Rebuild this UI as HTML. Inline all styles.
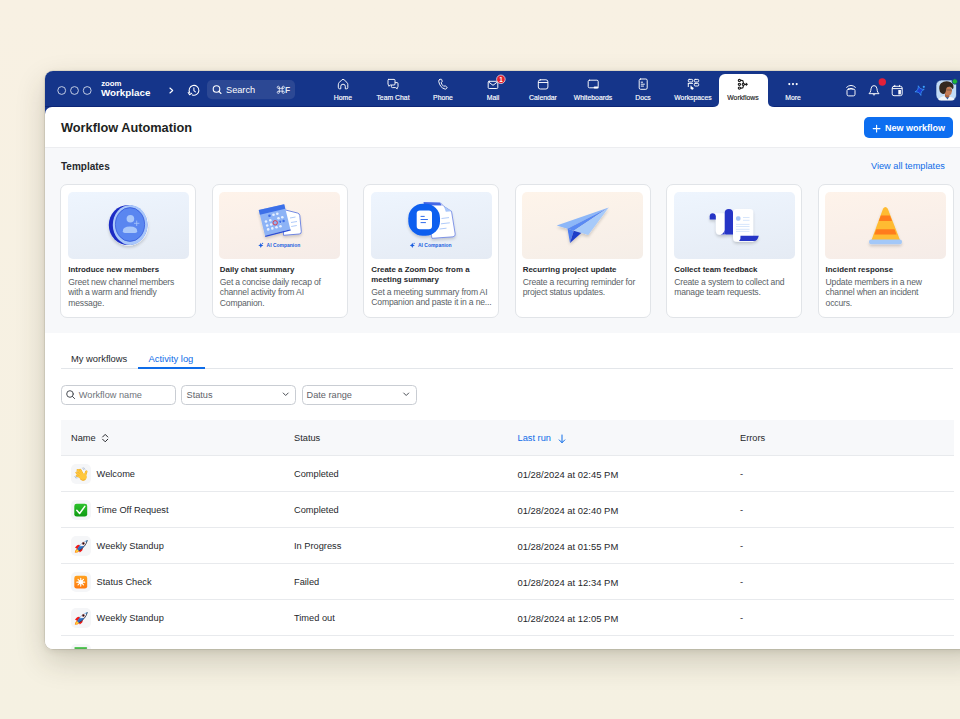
<!DOCTYPE html>
<html><head><meta charset="utf-8">
<style>
*{box-sizing:border-box;margin:0;padding:0}
html,body{width:960px;height:719px;overflow:hidden}
body{font-family:"Liberation Sans",sans-serif;background:linear-gradient(180deg,#F8F1E3 0%,#F5F1E2 100%);position:relative;color:#222}
.a{position:absolute;white-space:nowrap}
#win{position:absolute;left:45px;top:71px;width:940px;height:578px;border-radius:8px;background:#fff;overflow:hidden;box-shadow:0 0 0 0.5px rgba(60,55,40,0.18),0 12px 30px rgba(50,45,25,0.20),0 2px 6px rgba(50,45,25,0.10)}
#content{position:absolute;left:0;top:36px;width:100%;height:542px;background:#fff;border-radius:7px 0 0 0}
.nl{position:absolute;top:93.8px;width:60px;margin-left:-30px;text-align:center;color:#fff;font-size:6.85px;line-height:8px;white-space:nowrap;-webkit-text-stroke:0.15px #fff}
.card{position:absolute;top:183.6px;width:136px;height:134px;border:1px solid #E1E4E8;border-radius:7px;background:#fff}
.card .img{position:absolute;left:6.5px;top:7.4px;width:121px;height:67px;border-radius:5px;overflow:hidden}
.card .t{position:absolute;left:7px;top:80px;font-size:7.9px;font-weight:700;line-height:10.3px;color:#26282C;white-space:nowrap}
.card .d{position:absolute;left:7px;font-size:8.6px;letter-spacing:-0.18px;line-height:10.3px;color:#5A5F66;white-space:nowrap}
.th{position:absolute;top:433.4px;font-size:9.25px;line-height:11px;color:#26282C}
.td{position:absolute;font-size:9.25px;line-height:11px;color:#26282C;white-space:nowrap}
.rowline{position:absolute;left:60.5px;width:893px;height:1px;background:#E8EAED}
.ibox{position:absolute;left:71px;width:20px;height:20px;border-radius:5px;background:#F5F6F8}
</style></head><body>
<div id="win">
  <div style="position:absolute;left:0;top:0;width:100%;height:46px;background:#15358A"></div>
  <div style="position:absolute;left:0;top:35px;width:668px;height:1px;background:#0C2576"></div>
  <div style="position:absolute;left:729px;top:35px;width:300px;height:1px;background:#0C2576"></div>
  <div id="content"></div>
  <div style="position:absolute;left:674px;top:3px;width:49px;height:34px;background:#fff;border-radius:6px 6px 0 0"></div>
  <div style="position:absolute;left:668px;top:30px;width:6px;height:6px;background:#fff"></div>
  <div style="position:absolute;left:668px;top:29px;width:6px;height:7px;background:#15358A;border-radius:0 0 5px 0"></div>
  <div style="position:absolute;left:723px;top:30px;width:6px;height:6px;background:#fff"></div>
  <div style="position:absolute;left:723px;top:29px;width:6px;height:7px;background:#15358A;border-radius:0 0 0 5px"></div>
</div>
<!-- NAV -->
<svg class="a" style="left:0;top:0" width="960" height="719" viewBox="0 0 960 719">
  <g fill="none" stroke="#D4DBEC" stroke-width="0.9">
    <circle cx="61.7" cy="90.5" r="3.9"/>
    <circle cx="74.5" cy="90.5" r="3.9"/>
    <circle cx="87.2" cy="90.5" r="3.9"/>
  </g>
  <!-- chevron -->
  <path d="M169.9 88 L172.7 90.5 L169.9 93" fill="none" stroke="#fff" stroke-width="1.1" stroke-linecap="round" stroke-linejoin="round"/>
  <!-- history -->
  <g fill="none" stroke="#fff" stroke-width="1.05" stroke-linecap="round" stroke-linejoin="round">
    <path d="M189.76 92.75 A4.9 4.9 0 1 1 192.3 94.9"/>
    <path d="M188.2 92.5 L189.6 94.7 L191.7 93.3"/>
    <path d="M193.9 87.8 V90.6 L195.4 91.9"/>
  </g>
  <!-- search box -->
  <rect x="207" y="80" width="88" height="19.3" rx="5" fill="#2C4894"/>
  <g fill="none" stroke="#fff" stroke-width="1.1" stroke-linecap="round">
    <circle cx="216.5" cy="89" r="3.3"/>
    <path d="M218.9 91.4 L221 93.5"/>
  </g>
  <!-- nav icons -->
  <g fill="none" stroke="#fff" stroke-width="0.95" stroke-linecap="round" stroke-linejoin="round">
    <!-- home -->
    <path d="M338.3 84.5 Q338.3 83.3 339.3 82.4 L341.9 79.8 Q343 78.9 344.1 79.8 L346.9 82.4 Q347.8 83.3 347.8 84.5 V87.6 Q347.8 88.8 346.6 88.8 H345.3 V86.3 Q345.3 84.2 343 84.2 Q340.8 84.2 340.8 86.3 V88.8 H339.5 Q338.3 88.8 338.3 87.6 Z"/>
    <!-- team chat -->
    <path d="M388.6 79.4 H394 Q395 79.4 395 80.4 V84 Q395 85 394 85 H390.5 L388.8 86.2 V85 Q388 85 388 84 V80.4 Q388 79.4 388.6 79.4 Z"/>
    <path d="M395.5 82.6 H397 Q398 82.6 398 83.6 V86.6 Q398 87.6 397.2 87.6 V88.8 L395.5 87.6 H392.4 Q391.4 87.6 391.4 86.6 V85.6"/>
    <!-- phone -->
    <path d="M439.5 79.6 L440.9 79.2 Q441.5 79.1 441.7 79.6 L442.2 81.3 Q442.3 81.9 441.8 82.2 L441.1 82.6 Q441.8 84.9 443.9 86.5 L444.5 86 Q445 85.7 445.5 86 L446.8 87 Q447.3 87.4 447 87.9 L446.4 88.7 Q445.9 89.2 445.1 89.1 Q440 87.8 438.7 81.3 Q438.6 79.9 439.5 79.6 Z"/>
    <!-- mail -->
    <rect x="488.2" y="81.3" width="9.6" height="7.2" rx="1"/>
    <path d="M488.6 82 L493 85.3 L497.4 82"/>
    <!-- calendar -->
    <rect x="538.3" y="79.8" width="9.6" height="9.2" rx="2"/>
    <path d="M538.6 82.5 H547.6"/>
    <!-- whiteboards -->
    <rect x="588.2" y="80.2" width="10" height="7.6" rx="1.3"/>
    <!-- docs -->
    <rect x="639.2" y="79" width="8" height="10.3" rx="1.4"/>
    <path d="M641.2 82.2 H642.6 M641.2 84.2 H644.4 M641.2 86.1 H643.5"/>
    <!-- workspaces -->
    <rect x="688.3" y="79.4" width="4.4" height="2.6" rx="0.9"/>
    <rect x="694.3" y="79.4" width="4.4" height="2.6" rx="0.9"/>
    <rect x="694.3" y="83.4" width="4.4" height="2.6" rx="0.9"/>
    <path d="M688.3 83.4 H692.6 M688.3 83.4 V86.6"/>
  </g>
  <rect x="593.6" y="86.4" width="5" height="2.2" rx="1" fill="#fff"/>
  <path d="M690.6 85.6 Q691.4 85.3 691.6 86.3 L691.8 87 Q693.2 87 693.6 88 Q693.8 89.2 692.8 89.6 Q691.2 89.8 690.4 88.6 Z" fill="#fff"/>
  <!-- mail badge -->
  <circle cx="500.9" cy="79.3" r="4.3" fill="#E0202F" stroke="#E8EEFA" stroke-width="0.7"/>
  <text x="500.9" y="81.7" font-family="Liberation Sans" font-size="6.3" font-weight="700" fill="#fff" text-anchor="middle">1</text>

  <!-- workflows icon -->
  <g fill="none" stroke="#1A1A1A" stroke-width="1.15" stroke-linecap="round" stroke-linejoin="round">
    <circle cx="739.4" cy="80.4" r="1.1"/>
    <circle cx="739.4" cy="84.3" r="1.1"/>
    <circle cx="739.4" cy="88.1" r="1.1"/>
    <circle cx="743.3" cy="84.3" r="1.1"/>
    <path d="M740.6 80.4 H741.6 Q743.3 80.4 743.3 82.2 V83.1 M743.3 85.5 V86.4 Q743.3 88.1 741.6 88.1 H740.6 M744.5 84.3 H746.4"/>
  </g>
  <path d="M745.9 82.4 L748 84.3 L745.9 86.2 Z" fill="#1A1A1A"/>
  <!-- right icons -->
  <g fill="none" stroke="#fff" stroke-width="0.95" stroke-linecap="round" stroke-linejoin="round">
    <path d="M846.6 87.3 Q851 83.3 855.4 87.3"/>
    <path d="M848.7 89.2 Q851 87 853.3 89.2"/>
    <rect x="847" y="89" width="8" height="6.9" rx="1.6"/>
    <path d="M869.3 93.4 Q870.6 92.2 870.8 90.4 L871 88.8 Q871.3 85.6 874 85.6 Q876.7 85.6 877 88.8 L877.2 90.4 Q877.4 92.2 878.7 93.4 Z"/>
    <path d="M873 94.6 Q874 96 875 94.6"/>
    <rect x="892.2" y="86.3" width="10" height="9.4" rx="1.8"/>
    <path d="M892.5 88.6 H901.9 M894.8 85.3 V86.5 M899.6 85.3 V86.5"/>
  </g>
  <rect x="898.3" y="90" width="2.6" height="4.4" fill="#fff"/>
  <circle cx="882.3" cy="82" r="3.7" fill="#E2203A"/>
  <!-- AI sparkle -->
  <defs><linearGradient id="spk" x1="0" y1="0" x2="1" y2="1"><stop offset="0" stop-color="#37A2FF"/><stop offset="1" stop-color="#1545D8"/></linearGradient></defs>
  <path d="M919.6 85.6 Q920.3 89.9 924.4 90.6 Q920.3 91.3 919.6 95.6 Q918.9 91.3 914.8 90.6 Q918.9 89.9 919.6 85.6 Z" fill="#1B3CCF" stroke="#3C9BFF" stroke-width="0.7" transform="rotate(-15 919.6 90.6)"/>
  <circle cx="923.8" cy="86.8" r="1.1" fill="#3DA5FF"/>
  <!-- avatar -->
  <defs><clipPath id="avc"><rect x="936" y="80" width="20.5" height="20.5" rx="5.5"/></clipPath></defs>
  <rect x="936" y="80" width="20.5" height="20.5" rx="5.5" fill="#C2DBF6" stroke="#0F2C7A" stroke-width="0.6"/>
  <g clip-path="url(#avc)">
    <path d="M937.5 101 Q938.5 97.5 942.5 96.5 L946 95.8 Q951 96.5 953.5 98 Q955 99.5 955 101 Z" fill="#F4F6F9"/>
    <path d="M945.2 96.8 L947.6 99.5 L949.2 96.6 Z" fill="#2E5DA8"/>
    <path d="M944.8 92.5 Q945.4 95 944.8 96.6 Q947.5 98.6 949.6 96.5 L949 94 Z" fill="#A8623F"/>
    <path d="M944 88.5 Q945.5 85.6 949.2 86.2 Q951.8 87 952 90.2 Q952.2 91.5 951.6 92.3 Q951.8 93.4 950.8 94.4 Q949 96 946.8 95.4 Q944.6 94.2 944 91.5 Z" fill="#C47C57"/>
    <path d="M946.5 90 H951.8" stroke="#3A3A3A" stroke-width="0.5"/>
    <path d="M939.6 90.5 Q938.4 86 941 83.2 Q944 80.8 948.4 81.4 Q952.4 82.2 953.4 85.4 Q954 88 952.6 89.2 Q951.8 87.4 950 86.8 Q947.5 86.5 946.5 88 Q946 89.6 945.8 91.6 Q945.2 93.2 944.2 94 Q942.2 94.2 940.8 92.8 Q939.6 92 939.6 90.5 Z" fill="#34281F"/>
  </g>
  <circle cx="954.8" cy="81.5" r="2.7" fill="#1DB536" stroke="#15358A" stroke-width="0.8"/>

  <!-- more dots -->
  <g fill="#fff"><circle cx="789.3" cy="84.1" r="1.05"/><circle cx="793" cy="84.1" r="1.05"/><circle cx="796.7" cy="84.1" r="1.05"/></g>
</svg>
<div class="a" style="left:101.3px;top:80.4px;font-size:7.8px;font-weight:700;color:#fff;line-height:8px;letter-spacing:-0.1px">zoom</div>
<div class="a" style="left:101px;top:87px;font-size:9.8px;font-weight:700;color:#fff;line-height:11px">Workplace</div>
<div class="a" style="left:226px;top:85px;font-size:9.2px;color:#fff;line-height:10px">Search</div>
<svg class="a" style="left:276px;top:85px" width="10" height="10" viewBox="0 0 10 10"><g fill="none" stroke="#E6EAF4" stroke-width="0.8"><path d="M3.4 2.2 V7.2 M6.2 2.2 V7.2 M2.2 3.4 H7.4 M2.2 6.2 H7.4"/><circle cx="2.3" cy="2.3" r="1.1"/><circle cx="7.3" cy="2.3" r="1.1"/><circle cx="2.3" cy="7.3" r="1.1"/><circle cx="7.3" cy="7.3" r="1.1"/></g></svg>
<div class="a" style="left:285px;top:84.8px;font-size:8.3px;font-weight:700;color:#E6EAF4;line-height:10px">F</div>
<div class="nl" style="left:343px">Home</div>
<div class="nl" style="left:393px">Team Chat</div>
<div class="nl" style="left:443px">Phone</div>
<div class="nl" style="left:493px">Mail</div>
<div class="nl" style="left:543px">Calendar</div>
<div class="nl" style="left:593px">Whiteboards</div>
<div class="nl" style="left:643px">Docs</div>
<div class="nl" style="left:693px">Workspaces</div>
<div class="nl" style="left:743px;color:#222;-webkit-text-stroke:0.15px #222">Workflows</div>
<div class="nl" style="left:793px">More</div>



<!-- HEADER -->
<div class="a" style="left:45px;top:147px;width:915px;height:1px;background:#ECEDF0"></div>
<div class="a" style="left:45px;top:148px;width:915px;height:185px;background:#F7F8FA"></div>
<div class="a" style="left:61px;top:120px;font-size:12.75px;font-weight:700;line-height:15px;color:#1E1F22">Workflow Automation</div>
<div class="a" style="left:864px;top:117.3px;width:89px;height:20.5px;border-radius:5px;background:#0D6EF0"></div>
<svg class="a" style="left:872px;top:123.5px" width="9" height="9" viewBox="0 0 9 9"><path d="M4.6 1.2 V8 M1.2 4.6 H8" stroke="#fff" stroke-width="1.1" stroke-linecap="round"/></svg>
<div class="a" style="left:885px;top:123px;font-size:9px;font-weight:700;line-height:11px;color:#fff">New workflow</div>
<div class="a" style="left:61px;top:161px;font-size:10px;font-weight:700;line-height:12px;color:#26282C">Templates</div>
<div class="a" style="left:871px;top:161.4px;font-size:9.2px;line-height:11px;color:#0E6CE8">View all templates</div>

<!-- CARDS -->
<div class="card" style="left:60.3px"><div class="img" id="img1" style="background:linear-gradient(170deg,#EEF5FE,#E5EBF4)"></div>
  <div class="t">Introduce new members</div>
  <div class="d" style="top:92.6px">Greet new channel members<br>with a warm and friendly<br>message.</div></div>
<div class="card" style="left:211.8px"><div class="img" id="img2" style="background:linear-gradient(170deg,#FEF3EA,#F5ECE8)"></div>
  <div class="t">Daily chat summary</div>
  <div class="d" style="top:92.6px">Get a concise daily recap of<br>channel activity from AI<br>Companion.</div></div>
<div class="card" style="left:363.3px"><div class="img" id="img3" style="background:linear-gradient(170deg,#EEF5FE,#E5EBF4)"></div>
  <div class="t">Create a Zoom Doc from a<br>meeting summary</div>
  <div class="d" style="top:102.5px">Get a meeting summary from AI<br>Companion and paste it in a ne...</div></div>
<div class="card" style="left:514.7px"><div class="img" id="img4" style="background:linear-gradient(170deg,#FEF4EA,#F5EEE8)"></div>
  <div class="t">Recurring project update</div>
  <div class="d" style="top:92.6px">Create a recurring reminder for<br>project status updates.</div></div>
<div class="card" style="left:666.2px"><div class="img" id="img5" style="background:linear-gradient(170deg,#EEF5FE,#E5EBF4)"></div>
  <div class="t">Collect team feedback</div>
  <div class="d" style="top:92.6px">Create a system to collect and<br>manage team requests.</div></div>
<div class="card" style="left:817.6px"><div class="img" id="img6" style="background:linear-gradient(170deg,#FEF3EA,#F5ECE8)"></div>
  <div class="t">Incident response</div>
  <div class="d" style="top:92.6px">Update members in a new<br>channel when an incident<br>occurs.</div></div>

<!-- TABS -->
<div class="a" style="left:71px;top:353px;font-size:9.4px;line-height:11px;color:#26282C">My workflows</div>
<div class="a" style="left:148.5px;top:353px;font-size:9.4px;line-height:11px;color:#0E6CE8">Activity log</div>
<div class="a" style="left:61px;top:368px;width:892px;height:1px;background:#E3E6EA"></div>
<div class="a" style="left:138px;top:367px;width:67px;height:1.6px;background:#0E6CE8"></div>

<!-- FILTERS -->
<div class="a" style="left:60.5px;top:384.5px;width:115px;height:20px;border:1px solid #C9CDD3;border-radius:4.5px;background:#fff"></div>
<div class="a" style="left:181.2px;top:384.5px;width:115px;height:20px;border:1px solid #C9CDD3;border-radius:4.5px;background:#fff"></div>
<div class="a" style="left:301.7px;top:384.5px;width:115.3px;height:20px;border:1px solid #C9CDD3;border-radius:4.5px;background:#fff"></div>
<svg class="a" style="left:60px;top:384px" width="360" height="22" viewBox="60 384 360 22">
  <g fill="none" stroke="#4A4E55" stroke-width="1" stroke-linecap="round" stroke-linejoin="round">
    <circle cx="70" cy="394" r="3.3"/><path d="M72.4 396.4 L74.6 398.6"/>
    <path d="M283.2 393 L285.7 395.5 L288.2 393"/>
    <path d="M403.7 393 L406.2 395.5 L408.7 393"/>
  </g>
</svg>
<div class="a" style="left:78.8px;top:389.7px;font-size:9.2px;line-height:11px;color:#6E7379">Workflow name</div>
<div class="a" style="left:186.5px;top:389.7px;font-size:9.2px;line-height:11px;color:#5E6268">Status</div>
<div class="a" style="left:306.5px;top:389.7px;font-size:9.2px;line-height:11px;color:#5E6268">Date range</div>

<!-- TABLE -->
<div class="a" style="left:60.5px;top:420.3px;width:893px;height:35px;background:#F7F8FA"></div>
<div class="rowline" style="top:455px"></div>
<div class="th" style="left:71px">Name</div>
<svg class="a" style="left:100.3px;top:433.3px" width="10" height="10" viewBox="0 0 10 10"><path d="M2.6 4 L5.2 1.4 L7.8 4 M2.6 6.2 L5.2 8.8 L7.8 6.2" fill="none" stroke="#26282C" stroke-width="1" stroke-linecap="round" stroke-linejoin="round"/></svg>
<div class="th" style="left:294px">Status</div>
<div class="th" style="left:517.5px;color:#0E6CE8">Last run</div>
<svg class="a" style="left:556.5px;top:433.5px" width="10" height="10" viewBox="0 0 10 10"><path d="M5 1 V8.6 M2.2 5.9 L5 8.7 L7.8 5.9" fill="none" stroke="#0E6CE8" stroke-width="1" stroke-linecap="round" stroke-linejoin="round"/></svg>
<div class="th" style="left:740px">Errors</div>
<div class="ibox" style="top:464px" id="ib0"></div>
<div class="td" style="left:96.6px;top:468.5px">Welcome</div><div class="td" style="left:294px;top:468.5px">Completed</div><div class="td" style="left:517.5px;top:468.5px;font-size:9.45px">01/28/2024 at 02:45 PM</div><div class="td" style="left:740px;top:468.5px">-</div>
<div class="rowline" style="top:491px"></div>
<div class="ibox" style="top:500px" id="ib1"></div>
<div class="td" style="left:96.6px;top:504.5px">Time Off Request</div><div class="td" style="left:294px;top:504.5px">Completed</div><div class="td" style="left:517.5px;top:504.5px;font-size:9.45px">01/28/2024 at 02:40 PM</div><div class="td" style="left:740px;top:504.5px">-</div>
<div class="rowline" style="top:527px"></div>
<div class="ibox" style="top:536px" id="ib2"></div>
<div class="td" style="left:96.6px;top:540.5px">Weekly Standup</div><div class="td" style="left:294px;top:540.5px">In Progress</div><div class="td" style="left:517.5px;top:540.5px;font-size:9.45px">01/28/2024 at 01:55 PM</div><div class="td" style="left:740px;top:540.5px">-</div>
<div class="rowline" style="top:563px"></div>
<div class="ibox" style="top:572px" id="ib3"></div>
<div class="td" style="left:96.6px;top:576.5px">Status Check</div><div class="td" style="left:294px;top:576.5px">Failed</div><div class="td" style="left:517.5px;top:576.5px;font-size:9.45px">01/28/2024 at 12:34 PM</div><div class="td" style="left:740px;top:576.5px">-</div>
<div class="rowline" style="top:599px"></div>
<div class="ibox" style="top:608px" id="ib4"></div>
<div class="td" style="left:96.6px;top:612.5px">Weekly Standup</div><div class="td" style="left:294px;top:612.5px">Timed out</div><div class="td" style="left:517.5px;top:612.5px;font-size:9.45px">01/28/2024 at 12:05 PM</div><div class="td" style="left:740px;top:612.5px">-</div>
<div class="rowline" style="top:635px"></div>
<div class="ibox" style="top:644px;height:5px;border-radius:5px 5px 0 0"></div>

<!-- ILLUSTRATIONS -->
<svg class="a" style="left:0;top:0" width="960" height="719" viewBox="0 0 960 719">
  <defs>
    <filter id="sh" x="-30%" y="-30%" width="160%" height="160%"><feGaussianBlur in="SourceAlpha" stdDeviation="1.6"/><feOffset dx="0" dy="1.5"/><feComponentTransfer><feFuncA type="linear" slope="0.18"/></feComponentTransfer><feMerge><feMergeNode/><feMergeNode in="SourceGraphic"/></feMerge></filter>
    <linearGradient id="ogr" x1="0" y1="0" x2="0" y2="1"><stop offset="0" stop-color="#FFA21F"/><stop offset="1" stop-color="#FF7A10"/></linearGradient>
    <linearGradient id="ggr" x1="0" y1="0" x2="0" y2="1"><stop offset="0" stop-color="#2DC22D"/><stop offset="1" stop-color="#0E9A12"/></linearGradient>
  </defs>
  <!-- card1 coin -->
  <g filter="url(#sh)">
    <ellipse cx="128.6" cy="225" rx="19.6" ry="20.6" fill="#fff" opacity="0.85"/>
    <ellipse cx="128.1" cy="225" rx="19.3" ry="20.1" fill="#1A2BC4"/>
    <ellipse cx="130.2" cy="224.9" rx="17.4" ry="20" fill="#A9C7FA"/>
    <ellipse cx="130" cy="224.5" rx="14.6" ry="16.9" fill="#5A86F0" stroke="#2E50D8" stroke-width="0.7"/>
  </g>
  <g fill="#A9C7FA">
    <circle cx="130.4" cy="218.8" r="3.8"/>
    <path d="M122.8 231.2 Q122.8 226.6 130 226.6 Q137.2 226.6 137.2 231.2 Q137.2 233 135.2 233 H124.8 Q122.8 233 122.8 231.2 Z"/>
  </g>
  <path d="M136.7 221 V225.6 M134.4 223.3 H139" stroke="#A9C7FA" stroke-width="0.8" stroke-linecap="round"/>
  <!-- card2 calendar + doc -->
  <g filter="url(#sh)">
    <path d="M283.5 209.5 L297.5 213 Q299.5 213.6 299.8 215.5 L301.3 231.5 Q301.5 233.8 299.2 234 L283.5 235.3 Z" fill="#fff" stroke="#3B5BDB" stroke-width="0.7"/>
    <path d="M258.75 210 L284.2 204.2 L290.4 229.2 L265 235.8 Z" fill="#8DB3F6"/>
    <path d="M258.75 210 L284.2 204.2 L285.3 208.8 L259.9 214.7 Z" fill="#3E6FE8"/>
    <path d="M265 235.8 L290.4 229.2 L290.8 230.6 L265.4 237 Z" fill="#2B4FD6"/>
  </g>
  <g fill="#E6F0FF">
    <circle cx="266" cy="221.5" r="1.3"/><circle cx="270.3" cy="220.3" r="1.3"/><circle cx="278.5" cy="218.3" r="1.3"/><circle cx="282.3" cy="217.3" r="1.3"/>
    <circle cx="267.2" cy="225.5" r="1.3"/><circle cx="271.2" cy="224.5" r="1.3"/><circle cx="280.3" cy="222" r="1.3"/>
    <circle cx="268.2" cy="229.4" r="1.3"/><circle cx="272.3" cy="228.4" r="1.3"/><circle cx="276.5" cy="227.3" r="1.3"/><circle cx="280.5" cy="226.2" r="1.3"/>
    <circle cx="273.5" cy="214.8" r="1.3"/><circle cx="277.3" cy="213.8" r="1.3"/>
  </g>
  <g fill="#3E6FE8"><circle cx="269.5" cy="215.8" r="1.3"/><circle cx="280.3" cy="221.8" r="1.2"/><circle cx="283.6" cy="221" r="1.2"/></g>
  <circle cx="275.2" cy="222.8" r="2.2" fill="none" stroke="#E8313A" stroke-width="0.9"/>
  <g stroke="#8DB3F6" stroke-width="0.7"><path d="M290 218 L295.5 217 M291 222.5 L297 221.5 M291.2 226.5 L296.8 225.5"/></g>
  <!-- AI companion labels -->
  <g fill="#1B5EE0">
    <path d="M260.8 242.8 Q261.1 245 263.3 245.4 Q261.1 245.8 260.8 248 Q260.5 245.8 258.3 245.4 Q260.5 245 260.8 242.8 Z"/>
    <circle cx="262.6" cy="243.3" r="0.6"/>
    <path d="M412.3 242.8 Q412.6 245 414.8 245.4 Q412.6 245.8 412.3 248 Q412 245.8 409.8 245.4 Q412 245 412.3 242.8 Z"/>
    <circle cx="414.1" cy="243.3" r="0.6"/>
  </g>
  <text x="266.6" y="247.3" font-family="Liberation Sans" font-size="5" font-weight="700" fill="#1B5EE0" textLength="33.6" lengthAdjust="spacingAndGlyphs">AI Companion</text>
  <text x="418" y="247.3" font-family="Liberation Sans" font-size="5" font-weight="700" fill="#1B5EE0" textLength="33.6" lengthAdjust="spacingAndGlyphs">AI Companion</text>
  <!-- card3 doc app -->
  <g filter="url(#sh)">
    <path d="M424 202.5 L440.5 203 L444 206.5 L451.5 211.3 L455.2 234 Q455.5 236.5 453 236.8 L432 238.3 Z" fill="#fff" stroke="#3B5BDB" stroke-width="0.6"/>
    <path d="M423.5 202.2 L440 202.8 L441.7 205.6 L424.5 205.2 Z" fill="#4467E6"/>
    <path d="M444 206.5 L451.5 211.3 L445.8 211.8 Z" fill="#A8C6FA"/>
    <rect x="408.3" y="203.8" width="31.7" height="32" rx="14.5" fill="#0F5FEF"/>
  </g>
  <g stroke="#8DB3F6" stroke-width="0.7"><path d="M441.5 218.5 L449 217.6 M441 223.8 L449.8 222.8 M439.5 229 L446.5 228.2"/></g>
  <rect x="416.7" y="210.4" width="15.3" height="18.8" rx="3.2" fill="#fff"/>
  <g stroke="#1A5BEA" stroke-width="0.9" stroke-linecap="round"><path d="M421 216.4 H424.3 M421 219.5 H427.5 M421 222.6 H425.5"/></g>
  <!-- card4 paper plane -->
  <g filter="url(#sh)">
    <path d="M608.75 207.5 L556.7 225.4 L567.5 228.75 Z" fill="#8DB7F8"/>
    <path d="M608.75 207.5 L567.5 228.75 L573.75 230.8 Z" fill="#5A8AF3"/>
    <path d="M608.75 207.5 L573.75 230.8 L588.3 235 Z" fill="#A7CAF9"/>
    <path d="M567.5 228.75 L570 242.9 L573.75 230.8 Z" fill="#4E7EF0"/>
    <path d="M573.75 230.8 L570 242.9 L581.25 232.9 Z" fill="#1F3CC8"/>
  </g>
  <!-- card5 scroll -->
  <g filter="url(#sh)">
    <path d="M709.7 219.5 V216.3 Q709.7 213.2 712.8 213.2 Q715.9 213.2 715.9 216.3 V219.5 Z" fill="#2735C6"/>
    <path d="M712.8 213.2 H726 V234.8 H720 Q715.9 234.8 715.9 230.7 V216.3 Q715.9 213.2 712.8 213.2 Z" fill="#fff"/>
    <path d="M733 213 Q733 208.9 736.5 208.9 H750 Q753.2 208.9 753.2 212 V241.7 H737 Q733 241.7 733 237.7 Z" fill="#fff"/>
    <path d="M724.7 234.4 V213 Q724.7 208.9 728.85 208.9 Q733 208.9 733 213 V234.4 Z" fill="#2735C6"/>
    <path d="M720.5 234.6 Q723.5 234 724.7 230 V234.6 Z" fill="#2735C6"/>
    <path d="M740.5 235.8 H758.8 Q757.5 241 754 241 H739 Q741 239 740.5 235.8 Z" fill="#2735C6"/>
  </g>
  <rect x="736" y="216.2" width="4.5" height="4.5" rx="1.6" fill="#A9C8F7"/>
  <g stroke="#BCD5F8" stroke-width="0.6"><path d="M743 217.5 H749.5 M743 220.3 H749.5 M736 224.4 H749.5 M736 226.5 H749.5 M736 229.3 H749.5 M736 231.4 H749.5"/></g>
  <!-- card6 cone -->
  <g filter="url(#sh)">
    <path d="M883 208.8 Q885.4 205.3 887.8 208.8 L900 240 H871.5 Z" fill="#FFBB33"/>
    <path d="M880.9 215.6 H889.9 L892 220.9 H878.8 Z" fill="#FF7B1C"/>
    <path d="M876.3 229.2 H894.5 L896.5 234.4 H874.3 Z" fill="#FF7B1C"/>
    <rect x="869" y="239.6" width="33" height="4.6" rx="2.2" fill="#A3C8F8"/>
  </g>
  <!-- ROW ICONS -->
  <!-- wave -->
  <g stroke-linecap="round" fill="none">
    <g stroke="#E8A420" stroke-width="2.3">
      <path d="M82.4 474 L80.1 469.9"/><path d="M81.4 474.6 L77.7 470.1"/><path d="M80.8 475.6 L76.6 472.6"/><path d="M80.8 477 L76.9 475.7"/><path d="M84.8 476 L86.3 471.6"/>
    </g>
    <g stroke="#FFC83D" stroke-width="1.6">
      <path d="M82.4 474 L80.1 469.9"/><path d="M81.4 474.6 L77.7 470.1"/><path d="M80.8 475.6 L76.6 472.6"/><path d="M80.8 477 L76.9 475.7"/><path d="M84.8 476 L86.3 471.6"/>
    </g>
  </g>
  <ellipse cx="83.1" cy="477" rx="3.7" ry="3.4" transform="rotate(30 83.1 477)" fill="#FFC83D"/>
  <path d="M80.2 479.2 Q82.5 481.4 85.6 479.6" fill="none" stroke="#E89A1A" stroke-width="0.6"/>
  <g stroke="#9FB0C8" stroke-width="0.7" stroke-linecap="round"><path d="M82.6 468 L83.7 469.6 M83.8 467.7 L84.9 469.3 M74.8 476.6 L76 478.2 M76 476.3 L77.2 477.9"/></g>
  <!-- check -->
  <rect x="74.3" y="503.7" width="12.9" height="12.9" rx="2.4" fill="url(#ggr)"/>
  <path d="M76.8 510.3 L79.6 513.5 L84.8 506.4" fill="none" stroke="#fff" stroke-width="1.5" stroke-linecap="round" stroke-linejoin="round"/>
  <!-- rockets -->
  <g id="rk">
    <path d="M75 547.6 L77.2 545.2 Q78.6 544.4 80 545 L77.6 549.2 Z" fill="#F01818"/>
    <path d="M79.8 552.6 L82.2 550.4 Q83 549 82.6 547.6 L78.8 550.4 Z" fill="#F01818"/>
    <path d="M74.8 552.8 Q74.8 550 76.8 548.4 L79.4 550.9 Q77.8 552.8 74.8 552.8 Z" fill="#FF8A12"/>
    <path d="M75.8 552 Q76 550.4 77.2 549.4 L78.4 550.7 Q77.4 551.9 75.8 552 Z" fill="#FFE03A"/>
    <path d="M77.2 549.2 Q80.5 542.6 87.4 540.2 Q85.6 547 78.8 550.8 Z" fill="#2D6FC4"/>
    <path d="M79.6 546.2 Q82 542.2 87.4 540.2 Q86.6 543.6 84.2 546 Z" fill="#F2F5F8"/>
    <path d="M85 540.9 Q86.6 540.3 87.4 540.2 Q87.2 541.6 86.6 542.6 Z" fill="#5AA6E8"/>
    <path d="M87.4 540.2 Q85.6 547 78.8 550.8" fill="none" stroke="#2A2F3A" stroke-width="0.7"/>
    <circle cx="83.4" cy="543.5" r="1.15" fill="#111" stroke="#E23A3A" stroke-width="0.35"/>
  </g>
  <use href="#rk" transform="translate(0 72)"/>
  <!-- orange star -->
  <rect x="74.3" y="575.7" width="12.9" height="12.9" rx="2.4" fill="url(#ogr)"/>
  <g stroke="#fff" stroke-width="1.1" stroke-linecap="round"><path d="M80.75 578.2 V586.1 M76.8 582.15 H84.7 M78 579.4 L83.5 584.9 M83.5 579.4 L78 584.9"/></g>
  <circle cx="80.75" cy="582.15" r="2.2" fill="#fff"/>
  <rect x="74.3" y="647.2" width="12.9" height="1.6" rx="0.8" fill="url(#ggr)"/>
</svg>
</body></html>
